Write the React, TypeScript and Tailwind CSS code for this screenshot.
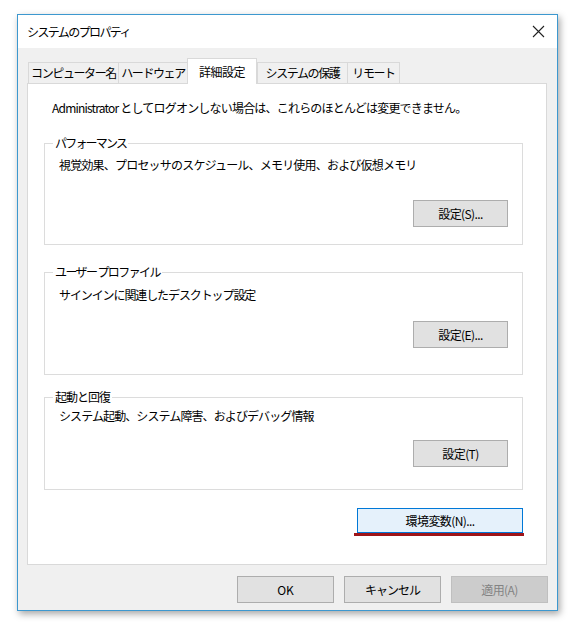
export default function App() {
    const tabs = [
        { label: "コンピューター名", w: "w-[91px]", active: false },
        { label: "ハードウェア", w: "w-[70px]", active: false },
        { label: "詳細設定", w: "w-[70px]", active: true },
        { label: "システムの保護", w: "w-[91px]", active: false },
        { label: "リモート", w: "w-[53px]", active: false },
    ]

    return (
        <div className="w-[586px] h-[628px] bg-white pt-[14px] pl-[17px] font-['Noto_Sans_CJK_JP','Noto_Sans',sans-serif] text-[12px] leading-[16px] text-black">
            <div className="w-[541px] h-[597px] border border-[#3d98cf] bg-[#f0f0f0] shadow-[2px_3px_7px_rgba(0,0,0,0.35)] flex flex-col">
                {/* title bar */}
                <div className="h-[33px] bg-white flex items-center justify-between pl-[9px] pr-[12px]">
                    <span className="tracking-[-1.6px]">システムのプロパティ</span>
                    <svg width="13" height="13" viewBox="0 0 13 13">
                        <path d="M1 1 L12 12 M12 1 L1 12" stroke="#222" strokeWidth="1.1" fill="none" />
                    </svg>
                </div>

                <div className="flex flex-col pl-[9px] pt-[10px]">
                    {/* tabs */}
                    <div className="flex items-end h-[25px] pl-[1px] relative z-10">
                        {tabs.map((t) =>
                            t.active ? (
                                <div key={t.label} className={`${t.w} h-[26px] -mb-[1px] bg-white border border-b-0 border-[#d9d9d9] flex items-center justify-center tracking-[-0.5px]`}>
                                    {t.label}
                                </div>
                            ) : (
                                <div key={t.label} className={`${t.w} h-[21px] bg-[#f0f0f0] border border-b-0 border-[#d9d9d9] -mr-[1px] flex items-center justify-center tracking-[-1.4px]`}>
                                    {t.label}
                                </div>
                            )
                        )}
                    </div>

                    {/* panel */}
                    <div className="w-[520px] h-[482px] bg-white border border-[#d9d9d9] pt-[16px]">
                        <div className="pl-[24px] tracking-[-0.8px]">
                            Administrator としてログオンしない場合は、これらのほとんどは変更できません。
                        </div>

                        <div className="pl-[16px] pr-[23px] mt-[19px] flex flex-col">
                            <fieldset className="border border-[#dcdcdc] px-[14px] pb-[17px]">
                                <legend className="ml-[-6px] px-[2px] tracking-[-1.8px]">パフォーマンス</legend>
                                <div className="mt-[6px] tracking-[-0.8px]">視覚効果、プロセッサのスケジュール、メモリ使用、および仮想メモリ</div>
                                <div className="flex justify-end mt-[27px]">
                                    <button className="w-[95px] h-[27px] bg-[#e1e1e1] border border-[#adadad] tracking-[-0.6px]">設定(S)...</button>
                                </div>
                            </fieldset>

                            <fieldset className="border border-[#dcdcdc] px-[14px] pb-[26px] mt-[19px]">
                                <legend className="ml-[-6px] px-[2px] tracking-[-1.6px]">ユーザー プロファイル</legend>
                                <div className="mt-[7px] tracking-[-1.1px]">サインインに関連したデスクトップ設定</div>
                                <div className="flex justify-end mt-[18px]">
                                    <button className="w-[95px] h-[27px] bg-[#e1e1e1] border border-[#adadad] tracking-[-0.6px]">設定(E)...</button>
                                </div>
                            </fieldset>

                            <fieldset className="border border-[#dcdcdc] px-[14px] pb-[22px] mt-[14px]">
                                <legend className="ml-[-6px] px-[2px] tracking-[-1px]">起動と回復</legend>
                                <div className="mt-[3px] tracking-[-0.9px]">システム起動、システム障害、およびデバッグ情報</div>
                                <div className="flex justify-end mt-[16px]">
                                    <button className="w-[95px] h-[27px] bg-[#e1e1e1] border border-[#adadad] tracking-[-0.6px]">設定(T)</button>
                                </div>
                            </fieldset>

                            <div className="flex justify-end mt-[18px]">
                                <div className="flex flex-col items-end">
                                    <button className="w-[166px] h-[25px] bg-[#e5f1fb] border border-[#0078d7] tracking-[-0.6px]">環境変数(N)...</button>
                                    <div className="w-[170px] h-[3px] bg-[#9e1519] mr-[-1px]" />
                                </div>
                            </div>
                        </div>
                    </div>

                    {/* footer */}
                    <div className="flex justify-end gap-[10px] mt-[11px] pr-[9px]">
                        <button className="w-[97px] h-[27px] bg-[#e1e1e1] border border-[#adadad]">OK</button>
                        <button className="w-[97px] h-[27px] bg-[#e1e1e1] border border-[#adadad] tracking-[-1px]">キャンセル</button>
                        <button className="w-[97px] h-[27px] bg-[#cccccc] border border-[#bfbfbf] text-[#838383] tracking-[-0.6px]">適用(A)</button>
                    </div>
                </div>
            </div>
        </div>
    )
}
